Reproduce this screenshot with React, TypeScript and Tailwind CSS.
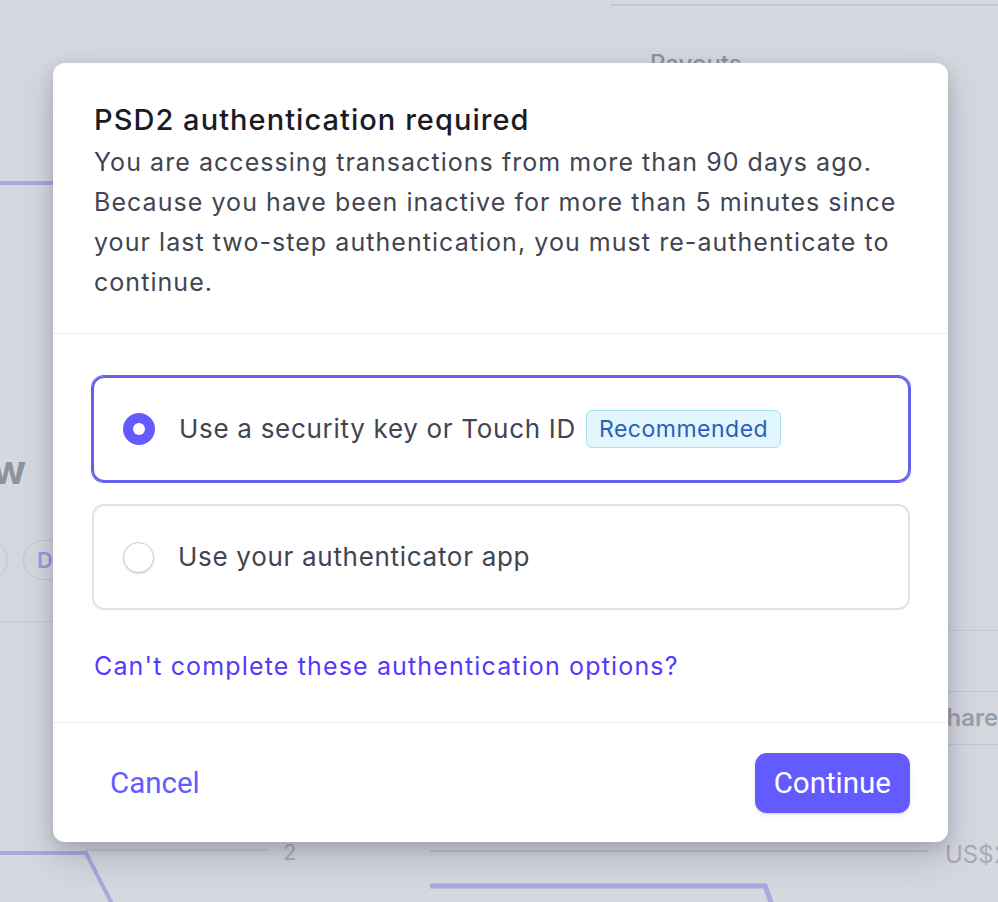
import React from 'react';

const bgMuted = 'text-[#8e929c]';

function Dashboard() {
  return (
    <div className="flex h-full font-['Inter',sans-serif]">
      {/* левая колонка */}
      <div className="w-[380px] shrink-0">
        <svg width="380" height="200" className="block">
          <line x1="0" y1="183" x2="380" y2="183" stroke="#aea6dd" strokeWidth="4" />
        </svg>
        <div className={`ml-[-161px] mt-[248px] whitespace-nowrap text-[40px] font-bold leading-[44px] ${bgMuted}`}>
          Overview
        </div>
        <div className="ml-[-60px] mt-[48px] flex h-[40px] gap-[15px]">
          <div className="h-[40px] w-[68px] rounded-full border border-[#c4c7cf]" />
          <div className="flex h-[40px] items-center rounded-full border border-[#c4c7cf] px-[13px] text-[22px] font-semibold text-[#9d98dc]">
            Day
          </div>
        </div>
        <div className="mt-[41px] border-t border-[#c6c9d1]" />
        <svg width="380" height="102" className="mt-[178px] block">
          <line x1="86" y1="50" x2="267" y2="50" stroke="#c3c6ce" strokeWidth="2" />
          <text x="283" y="60" fontSize="22" fill="#a7abb4" fontFamily="Inter, sans-serif">2</text>
          <polyline points="0,53 86,53 112,104" fill="none" stroke="#aea6dd" strokeWidth="4" />
        </svg>
      </div>

      {/* правая колонка */}
      <div className="min-w-0 flex-1">
        <div className="ml-[230px] mt-[4px] border-t-2 border-[#c6c9d1]" />
        <div className={`mt-[44px] pl-[270px] text-[24px] font-medium leading-[28px] ${bgMuted}`}>Payouts</div>
        <div className="ml-[50px] mt-[552px] border-t border-[#c6c9d1]" />
        <div className="ml-[538px] mt-[60px] flex h-[54px] w-[120px] items-center rounded-md border border-[#c4c7cf] px-[12px] text-[24px] font-semibold text-[#9a9ea8]">
          Share
        </div>
        <svg width="618" height="102" className="mt-[56px] block">
          <line x1="50" y1="50" x2="548" y2="50" stroke="#c3c6ce" strokeWidth="2" />
          <text x="565" y="62" fontSize="24" fill="#a7abb4" fontFamily="Inter, sans-serif">US$2,000</text>
          <polyline points="50,85 385,85 392,104" fill="none" stroke="#aea6dd" strokeWidth="5" />
        </svg>
      </div>
    </div>
  );
}

function Option({ label, selected, badge }: { label: string; selected?: boolean; badge?: string }) {
  return (
    <div
      className={
        selected
          ? 'flex h-[106px] items-center rounded-[12px] border-2 border-[#655ff0] pl-[29px] shadow-[0_0_0_1px_#655ff0]'
          : 'flex h-[106px] items-center rounded-[12px] border-2 border-[#e0e2e6] pl-[29px]'
      }
    >
      {selected ? (
        <span className="flex h-[32px] w-[32px] items-center justify-center rounded-full bg-[#635bff]">
          <span className="h-[12px] w-[12px] rounded-full bg-white" />
        </span>
      ) : (
        <span className="h-[31px] w-[31px] rounded-full border border-[#c9ccd2] bg-white shadow-[0_1px_2px_rgba(0,0,0,0.15)]" />
      )}
      <span className="ml-[24px] text-[26px] leading-[36px] tracking-[0.7px] text-[#414552]">{label}</span>
      {badge && (
        <span className="ml-[10px] rounded-[6px] border border-[#a7e0f2] bg-[#e2f6fd] px-[12px] text-[23px] leading-[36px] tracking-[0.5px] text-[#2b60b8]">
          {badge}
        </span>
      )}
    </div>
  );
}

export default function App() {
  return (
    <div className="relative h-[902px] w-[998px] overflow-hidden bg-[#d5d8df]">
      <Dashboard />

      {/* Модальное окно */}
      <div className="absolute inset-0 pl-[53px] pt-[63px] font-['Inter',sans-serif]">
        <div className="w-[895px] rounded-[12px] bg-white shadow-[0_15px_35px_rgba(49,49,93,0.22),0_5px_15px_rgba(0,0,0,0.12)]">
          <div className="px-[41px] pb-[31px] pt-[38px]">
            <h2 className="text-[29px] font-medium leading-[38px] tracking-[1.05px] text-[#1a1b25]">
              PSD2 authentication required
            </h2>
            <p className="mr-[-10px] mt-[3px] text-[25px] leading-[40px] tracking-[1.05px] text-[#414552]">
              You are accessing transactions from more than 90 days ago.
              <br />
              Because you have been inactive for more than 5 minutes since
              <br />
              your last two-step authentication, you must re-authenticate to
              <br />
              continue.
            </p>
          </div>

          <div className="border-t border-[#ebeef1] pl-[39px] pr-[38px] pt-[42px]">
            <div className="flex flex-col gap-[22px]">
              <Option label="Use a security key or Touch ID" selected badge="Recommended" />
              <Option label="Use your authenticator app" />
            </div>
            <div className="pb-[38px] pl-[2px] pt-[38px] text-[25px] leading-[36px] tracking-[1.15px] text-[#533afd]">
              Can't complete these authentication options?
            </div>
          </div>

          <div className="flex items-center justify-between border-t border-[#ebeef1] pb-[29px] pl-[41px] pr-[38px] pt-[30px] font-['Roboto',sans-serif]">
            <button className="px-[16px] text-[29.5px] leading-[60px] text-[#635bff]">Cancel</button>
            <button className="h-[60px] rounded-[12px] bg-[#635bff] px-[19px] text-[29.5px] text-white shadow-[0_2px_5px_rgba(60,66,87,0.12),0_1px_1px_rgba(0,0,0,0.12)]">
              Continue
            </button>
          </div>
        </div>
      </div>
    </div>
  );
}
